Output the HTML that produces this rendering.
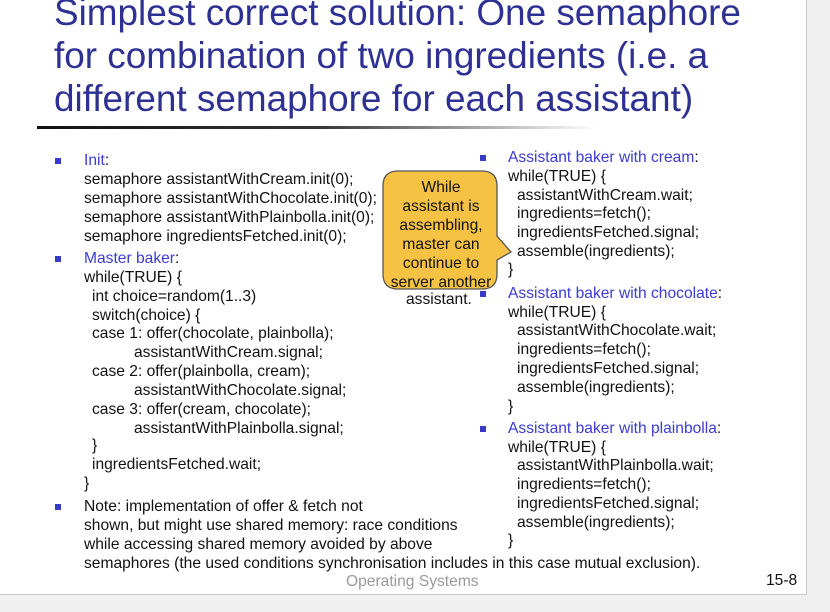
<!DOCTYPE html>
<html><head><style>
body{margin:0;width:830px;height:612px;background:#f0f0f0;position:relative;overflow:hidden;font-family:"Liberation Sans",sans-serif}
#s{position:absolute;left:0;top:0;width:806px;height:594px;background:#fff;border-right:1px solid #c8c8c8;border-bottom:1px solid #c8c8c8}
.t{position:absolute;left:54px;font-size:36.9px;color:#2e3192;white-space:nowrap;line-height:43px}
.l{position:absolute;font-size:15.6px;line-height:18px;white-space:nowrap;color:#111}
.b{color:#3b3bd6}
.d{position:absolute;width:6px;height:6px;background:#3a3ac8}
</style></head><body>
<div id="s">
<div class="t" style="top:-9px">Simplest correct solution: One semaphore</div>
<div class="t" style="top:34px">for combination of two ingredients (i.e. a</div>
<div class="t" style="top:77px">different semaphore for each assistant)</div>
<div style="position:absolute;left:37px;top:126px;width:560px;height:3px;background:linear-gradient(90deg,#111 0%,#333 50%,rgba(200,200,200,0) 100%)"></div>

<div class="d" style="left:55px;top:158px"></div>
<div class="l b" style="left:84px;top:152px">Init<span style="color:#111">:</span></div>
<div class="l" style="left:84px;top:171px">semaphore assistantWithCream.init(0);</div>
<div class="l" style="left:84px;top:190px">semaphore assistantWithChocolate.init(0);</div>
<div class="l" style="left:84px;top:209px">semaphore assistantWithPlainbolla.init(0);</div>
<div class="l" style="left:84px;top:228px">semaphore ingredientsFetched.init(0);</div>
<div class="d" style="left:55px;top:256px"></div>
<div class="l b" style="left:84px;top:250px">Master baker<span style="color:#111">:</span></div>
<div class="l" style="left:84px;top:269px">while(TRUE) {</div>
<div class="l" style="left:92px;top:288px">int choice=random(1..3)</div>
<div class="l" style="left:92px;top:307px">switch(choice) {</div>
<div class="l" style="left:92px;top:325px">case 1: offer(chocolate, plainbolla);</div>
<div class="l" style="left:134px;top:344px">assistantWithCream.signal;</div>
<div class="l" style="left:92px;top:363px">case 2: offer(plainbolla, cream);</div>
<div class="l" style="left:134px;top:382px">assistantWithChocolate.signal;</div>
<div class="l" style="left:92px;top:401px">case 3: offer(cream, chocolate);</div>
<div class="l" style="left:134px;top:420px">assistantWithPlainbolla.signal;</div>
<div class="l" style="left:92px;top:437px">}</div>
<div class="l" style="left:92px;top:456px">ingredientsFetched.wait;</div>
<div class="l" style="left:84px;top:475px">}</div>
<div class="d" style="left:55px;top:504px"></div>
<div class="l" style="left:84px;top:498px">Note: implementation of offer &amp; fetch not</div>
<div class="l" style="left:84px;top:517px">shown, but might use shared memory: race conditions</div>
<div class="l" style="left:84px;top:536px">while accessing shared memory avoided by above</div>
<div class="l" style="left:84px;top:555px">semaphores (the used conditions synchronisation includes in this case mutual exclusion).</div>
<div class="l" style="left:406px;top:291px">assistant.</div>

<div class="d" style="left:480px;top:155px"></div>
<div class="l b" style="left:508px;top:149px">Assistant baker with cream<span style="color:#111">:</span></div>
<div class="l" style="left:508px;top:168px">while(TRUE) {</div>
<div class="l" style="left:517px;top:187px">assistantWithCream.wait;</div>
<div class="l" style="left:517px;top:205px">ingredients=fetch();</div>
<div class="l" style="left:517px;top:224px">ingredientsFetched.signal;</div>
<div class="l" style="left:517px;top:243px">assemble(ingredients);</div>
<div class="l" style="left:508px;top:261px">}</div>
<div class="d" style="left:480px;top:291px"></div>
<div class="l b" style="left:508px;top:285px">Assistant baker with chocolate<span style="color:#111">:</span></div>
<div class="l" style="left:508px;top:304px">while(TRUE) {</div>
<div class="l" style="left:517px;top:322px">assistantWithChocolate.wait;</div>
<div class="l" style="left:517px;top:341px">ingredients=fetch();</div>
<div class="l" style="left:517px;top:360px">ingredientsFetched.signal;</div>
<div class="l" style="left:517px;top:379px">assemble(ingredients);</div>
<div class="l" style="left:508px;top:398px">}</div>
<div class="d" style="left:480px;top:426px"></div>
<div class="l b" style="left:508px;top:420px">Assistant baker with plainbolla<span style="color:#111">:</span></div>
<div class="l" style="left:508px;top:439px">while(TRUE) {</div>
<div class="l" style="left:517px;top:457px">assistantWithPlainbolla.wait;</div>
<div class="l" style="left:517px;top:476px">ingredients=fetch();</div>
<div class="l" style="left:517px;top:495px">ingredientsFetched.signal;</div>
<div class="l" style="left:517px;top:514px">assemble(ingredients);</div>
<div class="l" style="left:508px;top:532px">}</div>

<svg style="position:absolute;left:378px;top:168px" width="140" height="128">
<path d="M20 3 H104 Q119 3 119 18 V68 L133 84 L119 92 V106 Q119 121 104 121 H20 Q5 121 5 106 V18 Q5 3 20 3 Z" fill="#f6c244" stroke="#555" stroke-width="1.3"/>
</svg>
<div class="l" style="left:382px;top:178px;width:118px;text-align:center;line-height:19px">While<br>assistant is<br>assembling,<br>master can<br>continue to<br>server another</div>

<div class="l" style="left:346px;top:573px;color:#999">Operating Systems</div>
<div class="l" style="left:766px;top:572px">15-8</div>
</div>
</body></html>
